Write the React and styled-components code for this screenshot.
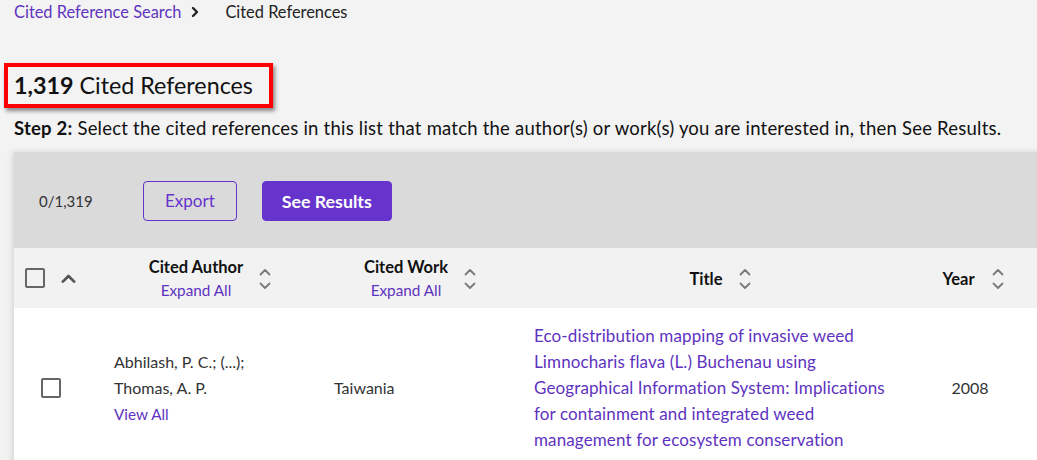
import React from "react";
import styled, { createGlobalStyle } from "styled-components";

const GlobalStyle = createGlobalStyle`
  body {
    margin: 0;
    background: #f3f3f3;
    font-family: Lato, "Noto Sans", sans-serif;
    color: #222;
    overflow: hidden;
  }
`;

const Page = styled.div`
  width: 1037px;
  height: 460px;
  overflow: hidden;
`;

const Breadcrumb = styled.nav`
  display: flex;
  align-items: center;
  height: 23px;
  padding: 0 0 0 14px;
  font-size: 16.4px;
`;

const Crumb = styled.a`
  color: ${(p) => (p.$current ? "#222" : "#5e33bf")};
  text-decoration: none;
`;

const Sep = styled.span`
  display: flex;
  margin: 0 24px 0 8px;
`;

const Heading = styled.h1`
  display: block;
  width: max-content;
  margin: 40px 0 0 4px;
  padding: 3px 16px 3px 6px;
  border: 4px solid #f00;
  box-shadow: 2px 3px 4px rgba(0, 0, 0, 0.45);
  font-size: 23.3px;
  font-weight: 400;
  line-height: 31px;
  color: #111;
  b {
    font-weight: 700;
  }
`;

const Step = styled.p`
  margin: 8px 0 0 14px;
  font-size: 18.5px;
  letter-spacing: 0.22px;
  line-height: 24px;
  color: #111;
  b {
    font-weight: 700;
  }
`;

const Panel = styled.section`
  margin: 12px 0 0 14px;
  width: 1040px;
  box-shadow: -2px 0 6px rgba(0, 0, 0, 0.12);
`;

const Toolbar = styled.div`
  display: flex;
  align-items: center;
  height: 96px;
  background: #dadada;
  padding: 1px 0 0 25px;
  box-sizing: border-box;
`;

const Count = styled.span`
  font-size: 15px;
  color: #333;
  width: 104px;
`;

const Button = styled.button`
  height: 40px;
  padding: 0 ${(p) => (p.$primary ? "19px" : "21px")};
  margin-right: 25px;
  border-radius: 4px;
  font-family: inherit;
  font-size: ${(p) => (p.$primary ? "17.8px" : "17px")};
  border: 1px solid #6633cc;
  background: ${(p) => (p.$primary ? "#6633cc" : "transparent")};
  color: ${(p) => (p.$primary ? "#fff" : "#6633cc")};
  font-weight: ${(p) => (p.$primary ? 700 : 400)};
  cursor: pointer;
`;

const Grid = styled.div`
  display: grid;
  grid-template-columns: 86px 220px 200px 400px 106px;
  background: ${(p) => (p.$head ? "#f2f2f2" : "#fff")};
  height: ${(p) => (p.$head ? "60px" : "160px")};
`;

const HeadCell = styled.div`
  display: flex;
  align-items: center;
  justify-content: center;
  padding-top: 2px;
  gap: ${(p) => p.$gap || "16px"};
`;

const HeadStack = styled.div`
  display: flex;
  flex-direction: column;
  align-items: center;
`;

const HeadLabel = styled.span`
  font-size: 16.5px;
  font-weight: 700;
  line-height: 23px;
  color: #111;
`;

const LinkText = styled.a`
  color: #5e33bf;
  font-size: 15.3px;
  text-decoration: none;
  line-height: ${(p) => (p.$tight ? "26px" : "23px")};
`;

const SelectCell = styled.div`
  display: flex;
  align-items: center;
  padding-left: ${(p) => (p.$head ? "11px" : "27px")};
  gap: 16px;
`;

const Box = styled.span`
  display: inline-block;
  width: 16px;
  height: 16px;
  border: 2px solid #666;
  border-radius: 2px;
`;

const Cell = styled.div`
  display: flex;
  flex-direction: column;
  justify-content: center;
  align-items: ${(p) => (p.$center ? "center" : "flex-start")};
  padding: ${(p) => (p.$center ? "0 6px 0 0" : "0 0 0 14px")};
  font-size: 16px;
  line-height: 26px;
  color: #333;
`;

const TitleLink = styled.a`
  color: #5e33bf;
  text-decoration: none;
  font-size: 17px;
  letter-spacing: 0.12px;
  line-height: 26px;
  span {
    display: block;
  }
`;

const Chevron = ({ dir = "right", size = 12, color = "#222", w = 2.4 }) => (
  <svg width={size} height={size} viewBox="0 0 12 12" fill="none">
    <path
      d={dir === "right" ? "M4 2l4 4-4 4" : "M1.5 8.5L6 4l4.5 4.5"}
      stroke={color}
      strokeWidth={w}
      strokeLinecap="round"
      strokeLinejoin="round"
    />
  </svg>
);

const SortIcon = () => (
  <svg width="12" height="22" viewBox="0 0 12 22" fill="none">
    <path d="M1.5 6.5L6 2l4.5 4.5" stroke="#7a7a7a" strokeWidth="1.8" strokeLinecap="round" strokeLinejoin="round" />
    <path d="M1.5 15.5L6 20l4.5-4.5" stroke="#7a7a7a" strokeWidth="1.8" strokeLinecap="round" strokeLinejoin="round" />
  </svg>
);

const Column = ({ label, expand, gap }) => (
  <HeadCell $gap={gap}>
    <HeadStack>
      <HeadLabel>{label}</HeadLabel>
      {expand && <LinkText href="#">Expand All</LinkText>}
    </HeadStack>
    <SortIcon />
  </HeadCell>
);

export default function App() {
  return (
    <Page>
      <GlobalStyle />
      <Breadcrumb>
        <Crumb href="#">Cited Reference Search</Crumb>
        <Sep>
          <Chevron />
        </Sep>
        <Crumb $current>Cited References</Crumb>
      </Breadcrumb>
      <Heading>
        <b>1,319</b> Cited References
      </Heading>
      <Step>
        <b>Step 2:</b> Select the cited references in this list that match the author(s) or work(s) you are interested in, then See Results.
      </Step>
      <Panel>
        <Toolbar>
          <Count>0/1,319</Count>
          <Button>Export</Button>
          <Button $primary>See Results</Button>
        </Toolbar>
        <Grid $head>
          <SelectCell $head>
            <Box />
            <Chevron dir="up" size={15} color="#555" w={2.2} />
          </SelectCell>
          <Column label="Cited Author" expand />
          <Column label="Cited Work" expand />
          <Column label="Title" />
          <Column label="Year" gap="17px" />
        </Grid>
        <Grid>
          <SelectCell>
            <Box />
          </SelectCell>
          <Cell>
            <span>Abhilash, P. C.; (...);</span>
            <span>Thomas, A. P.</span>
            <LinkText href="#" $tight>View All</LinkText>
          </Cell>
          <Cell>Taiwania</Cell>
          <Cell>
            <TitleLink href="#">
              <span>Eco-distribution mapping of invasive weed</span>
              <span>Limnocharis flava (L.) Buchenau using</span>
              <span>Geographical Information System: Implications</span>
              <span>for containment and integrated weed</span>
              <span>management for ecosystem conservation</span>
            </TitleLink>
          </Cell>
          <Cell $center>2008</Cell>
        </Grid>
      </Panel>
    </Page>
  );
}
